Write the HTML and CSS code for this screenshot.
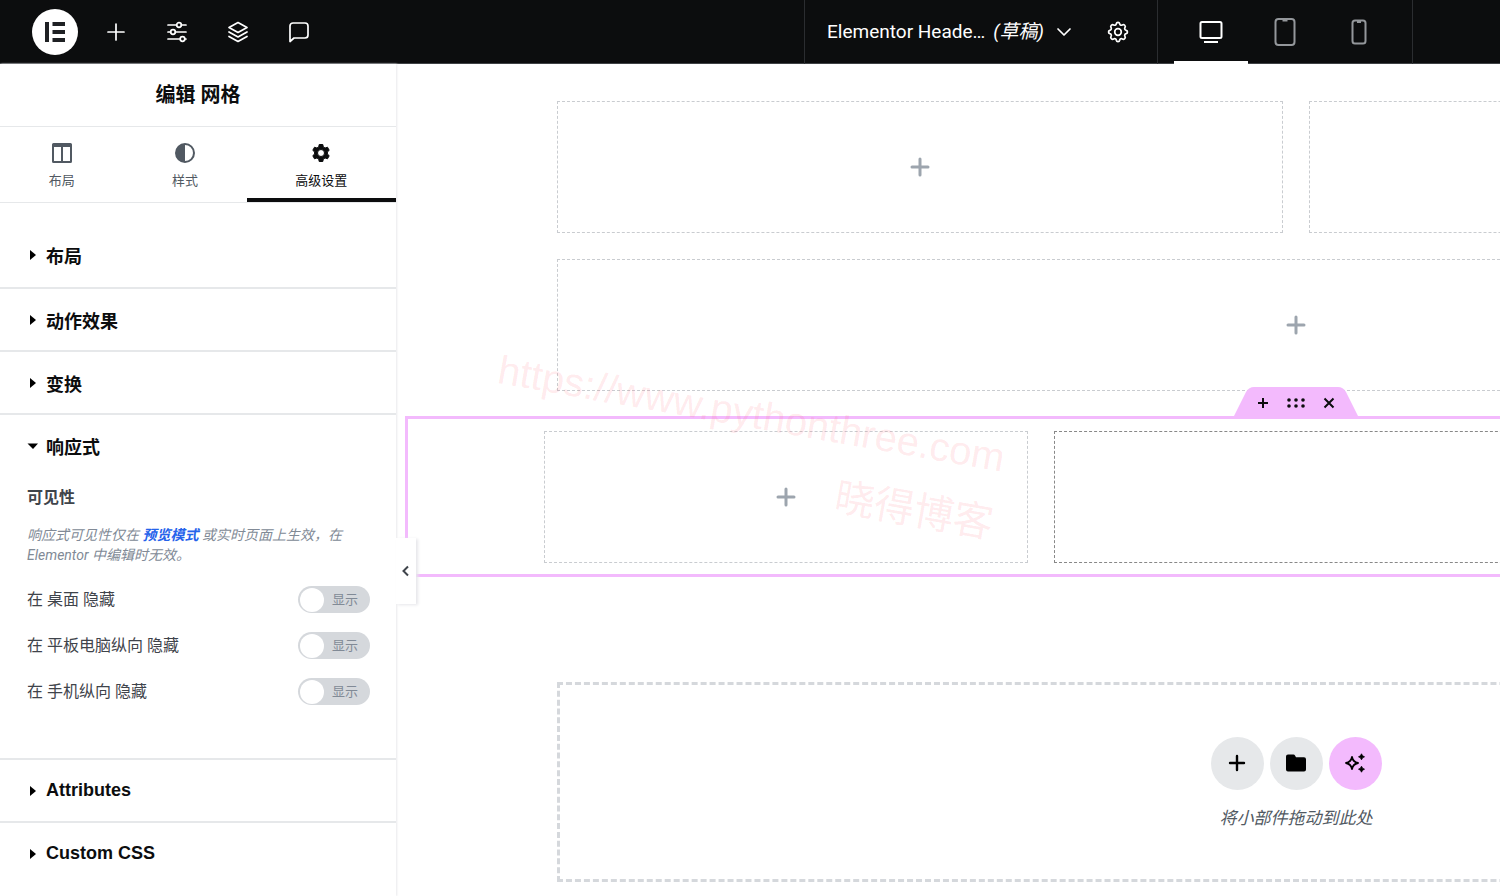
FILE: index.html
```html
<!DOCTYPE html>
<html lang="zh-CN">
<head>
<meta charset="utf-8">
<title>Elementor Header</title>
<link rel="stylesheet" href="styles.css">
</head>
<body class="editor">
<header class="topbar">
  <div class="tools">
    <button class="logo" aria-label="Elementor">
      <svg width="46" height="46" viewBox="0 0 46 46"><circle cx="23" cy="23" r="23" fill="#fff"/><path fill="#1f2124" d="M13 13h4v20h-4zM20.500 13H33v4H20.500zM20.500 21H33v4H20.500zM20.500 29H33v4H20.500z"/></svg>
    </button>
    <button class="tool" aria-label="添加元素"><svg class="line" width="24" height="24" viewBox="0 0 24 24"><path d="M12 4v16M4 12h16"/></svg></button>
    <button class="tool" aria-label="站点设置"><svg class="line" width="24" height="24" viewBox="0 0 24 24"><path d="M3 5h8.500M16.500 5H21M3 12h2.500M10.500 12H21M3 19h12M20 19h1"/><circle cx="14" cy="5" r="2.300"/><circle cx="8" cy="12" r="2.300"/><circle cx="17.500" cy="19" r="2.300"/></svg></button>
    <button class="tool" aria-label="结构"><svg class="line" width="24" height="24" viewBox="0 0 24 24"><path d="M12 2.500 21 7.500 12 12.500 3 7.500zM3 12l9 5 9-5M3 16.500l9 5 9-5"/></svg></button>
    <button class="tool" aria-label="备注"><svg class="line" width="24" height="24" viewBox="0 0 24 24"><path d="M3 21.500V6a3 3 0 0 1 3-3h12a3 3 0 0 1 3 3v9a3 3 0 0 1-3 3H7z"/></svg></button>
  </div>
  <div class="document">
    <button class="doc-name"><span>Elementor Heade…</span><i>(草稿)</i><svg class="line" width="16" height="16" viewBox="0 0 16 16"><path d="M2 5l6 6 6-6"/></svg></button>
    <button class="tool" aria-label="设置"><svg class="line" width="24" height="24" viewBox="0 0 24 24"><path d="M10.300 3.800c.4-1.800 3-1.800 3.400 0a1.700 1.700 0 0 0 2.700 1.100c1.600-1 3.700 1 2.600 2.700a1.700 1.700 0 0 0 1.100 2.700c1.800.4 1.800 3 0 3.400a1.700 1.700 0 0 0-1.100 2.700c1 1.600-1 3.600-2.600 2.600a1.700 1.700 0 0 0-2.700 1.200c-.4 1.800-3 1.800-3.400 0a1.700 1.700 0 0 0-2.700-1.200c-1.600 1-3.600-1-2.600-2.600a1.700 1.700 0 0 0-1.100-2.700c-1.800-.4-1.800-3 0-3.400A1.700 1.700 0 0 0 5 7.600C4 6 6 4 7.600 4.900a1.700 1.700 0 0 0 2.700-1.100z"/><circle cx="12" cy="12" r="3.300"/></svg></button>
  </div>
  <div class="devices">
    <button class="device active" aria-label="桌面"><svg width="28" height="28" viewBox="0 0 28 28"><rect x="3.500" y="4" width="21" height="16" rx="1.500"/><path d="M7 24h14"/></svg></button>
    <button class="device" aria-label="平板电脑"><svg width="28" height="28" viewBox="0 0 28 28"><rect x="4.500" y="1" width="19" height="26" rx="3"/><path d="M11.500 2.500h5"/></svg></button>
    <button class="device" aria-label="手机"><svg width="28" height="28" viewBox="0 0 28 28"><rect x="7.500" y="2.500" width="13" height="23" rx="2.500"/><path d="M12 4h4"/></svg></button>
  </div>
  <div class="topbar-end"></div>
</header>
<div class="workspace">
  <aside class="panel">
    <h1 class="panel-title">编辑 网格</h1>
    <nav class="tabs">
      <button class="tab"><svg width="22" height="22" viewBox="0 0 22 22"><path fill="currentColor" fill-rule="evenodd" d="M2.500 1h17A1.500 1.500 0 0 1 21 2.500v17a1.500 1.500 0 0 1-1.500 1.500h-17A1.500 1.500 0 0 1 1 19.500v-17A1.500 1.500 0 0 1 2.500 1zM3 5v14h7V5zM12 5v14h7V5z"/></svg><span>布局</span></button>
      <button class="tab"><svg width="22" height="22" viewBox="0 0 22 22"><circle cx="11" cy="11" r="9" fill="none" stroke="currentColor" stroke-width="2"/><path fill="currentColor" d="M11 2v18a9 9 0 0 1 0-18z"/></svg><span>样式</span></button>
      <button class="tab active"><svg width="22" height="22" viewBox="0 0 22 22"><path fill="currentColor" stroke="currentColor" stroke-linejoin="round" fill-rule="evenodd" d="M9.200 2.500h3.600l.5 2.400 1.800 1.100 2.400-.8 1.700 3.100-1.800 1.700v2l1.800 1.700-1.700 3.100-2.400-.8-1.800 1.100-.5 2.400H9.200l-.5-2.400-1.800-1.100-2.400.8-1.700-3.100L4.600 12v-2L2.800 8.300l1.700-3.100 2.400.8 1.800-1.100zM11 7.500a3.500 3.500 0 1 0 0 7 3.500 3.500 0 0 0 0-7z"/></svg><span>高级设置</span></button>
    </nav>
    <div class="sections">
      <section class="section"><button class="section-head"><svg class="caret" width="12" height="12" viewBox="0 0 12 12"><path d="M4 1l6 5-6 5z"/></svg>布局</button></section>
      <section class="section"><button class="section-head"><svg class="caret" width="12" height="12" viewBox="0 0 12 12"><path d="M4 1l6 5-6 5z"/></svg>动作效果</button></section>
      <section class="section"><button class="section-head"><svg class="caret" width="12" height="12" viewBox="0 0 12 12"><path d="M4 1l6 5-6 5z"/></svg>变换</button></section>
      <section class="section">
        <button class="section-head" aria-expanded="true"><svg class="caret" width="12" height="12" viewBox="0 0 12 12"><path d="M1.500 3.500H12L7 9z"/></svg>响应式</button>
        <div class="section-body">
          <h2 class="group-title">可见性</h2>
          <p class="hint">响应式可见性仅在 <a href="#preview">预览模式</a> 或实时页面上生效，在 Elementor 中编辑时无效。</p>
          <div class="controls">
            <label class="control"><span>在 桌面 隐藏</span><span class="switch"><input type="checkbox"><span class="switch-text">显示</span></span></label>
            <label class="control"><span>在 平板电脑纵向 隐藏</span><span class="switch"><input type="checkbox"><span class="switch-text">显示</span></span></label>
            <label class="control"><span>在 手机纵向 隐藏</span><span class="switch"><input type="checkbox"><span class="switch-text">显示</span></span></label>
          </div>
        </div>
      </section>
      <section class="section"><button class="section-head"><svg class="caret" width="12" height="12" viewBox="0 0 12 12"><path d="M4 1l6 5-6 5z"/></svg>Attributes</button></section>
      <section class="section"><button class="section-head"><svg class="caret" width="12" height="12" viewBox="0 0 12 12"><path d="M4 1l6 5-6 5z"/></svg>Custom CSS</button></section>
    </div>
    <button class="collapse" aria-label="收起面板"><svg width="12" height="12" viewBox="0 0 12 12"><path d="M8 1.500 3.500 6 8 10.500"/></svg></button>
  </aside>
  <main class="preview" id="preview">
    <div class="page">
      <div class="grid two">
        <div class="cell"><svg class="plus" width="20" height="20" viewBox="0 0 20 20"><path d="M10 2v16M2 10h16"/></svg></div>
        <div class="cell"></div>
        <div class="cell wide"><svg class="plus" width="20" height="20" viewBox="0 0 20 20"><path d="M10 2v16M2 10h16"/></svg></div>
      </div>
      <div class="selected">
        <div class="handle">
          <svg class="handle-shape" width="124" height="32" viewBox="0 0 124 32"><path d="M0 32V29L12 5Q15 0 20 0H104Q109 0 112 5L124 29V32z"/></svg>
          <button aria-label="添加"><svg width="12" height="12" viewBox="0 0 12 12"><path d="M6 1v10M1 6h10"/></svg></button>
          <button aria-label="编辑"><svg width="20" height="12" viewBox="0 0 20 12"><g class="dots"><circle cx="3" cy="3" r="1.800"/><circle cx="10" cy="3" r="1.800"/><circle cx="17" cy="3" r="1.800"/><circle cx="3" cy="9" r="1.800"/><circle cx="10" cy="9" r="1.800"/><circle cx="17" cy="9" r="1.800"/></g></svg></button>
          <button aria-label="删除"><svg width="12" height="12" viewBox="0 0 12 12"><path d="M1.500 1.500l9 9M10.500 1.500l-9 9"/></svg></button>
        </div>
        <div class="grid three">
          <div class="cell"><svg class="plus" width="20" height="20" viewBox="0 0 20 20"><path d="M10 2v16M2 10h16"/></svg></div>
          <div class="cell dark"></div>
          <div class="cell dark"></div>
        </div>
      </div>
      <div class="dropzone">
        <div class="drop-actions">
          <button class="round" aria-label="添加容器"><svg width="18" height="18" viewBox="0 0 18 18"><path d="M9 2v14M2 9h14" stroke="#000" stroke-width="2.400" stroke-linecap="round"/></svg></button>
          <button class="round" aria-label="模板库"><svg width="22" height="20" viewBox="0 0 22 20"><path d="M3 1.500h5.500q1 0 1.500 1l1 1.800h8q2 0 2 2v10.200q0 2-2 2H3q-2 0-2-2v-13q0-2 2-2z"/></svg></button>
          <button class="round pink" aria-label="AI"><svg width="22" height="22" viewBox="0 0 22 22"><path d="M8 5Q9 10 14 11 9 12 8 17 7 12 2 11 7 10 8 5z" fill="none" stroke="#000" stroke-width="1.800" stroke-linejoin="round"/><path d="M17.500 1.800q.6 2.400 3 3-2.400.6-3 3-.6-2.400-3-3 2.400-.6 3-3zM17.500 14.200q.6 2.400 3 3-2.400.6-3 3-.6-2.400-3-3 2.400-.6 3-3z" stroke="#000" stroke-width=".8"/></svg></button>
        </div>
        <p class="drop-text">将小部件拖动到此处</p>
      </div>
    </div>
  </main>
</div>
<div class="watermark" aria-hidden="true"><span>https://www.pythonthree.com</span><span>晓得博客</span></div>
</body>
</html>
```
FILE: styles.css
```css
* { box-sizing: border-box; }

.editor {
  margin: 0;
  height: 100vh;
  display: flex;
  flex-direction: column;
  overflow: hidden;
  position: relative;
  background: #fff;
  color: #0c0d0e;
  font-family: Roboto, "Noto Sans CJK SC", sans-serif;
}

button {
  display: flex;
  align-items: center;
  justify-content: center;
  padding: 0;
  border: 0;
  background: none;
  color: inherit;
  font: inherit;
  cursor: pointer;
}

h1, h2, p { margin: 0; }

/* Top bar */
.topbar {
  display: grid;
  grid-template-columns: 1fr auto auto 88px;
  flex: none;
  height: 64px;
  background: #0c0d0e;
  border-bottom: 1px solid #3f4245;
  color: #fff;
}

.tools { display: flex; align-items: center; gap: 17px; padding-left: 32px; }
.tool { width: 44px; height: 44px; }
.logo { width: 45px; }
.logo svg { flex: none; }

.line {
  fill: none;
  stroke: currentColor;
  stroke-width: 1.7;
  stroke-linecap: round;
  stroke-linejoin: round;
}

.document {
  display: flex;
  align-items: center;
  gap: 24px;
  padding: 0 17px 0 22px;
  border-left: 1px solid #2b2d30;
  border-right: 1px solid #2b2d30;
}

.doc-name { gap: 8px; font-size: 19px; line-height: 24px; white-space: nowrap; }
.doc-name .line { margin-left: 4px; }

.devices { display: flex; padding: 0 16px; }
.topbar-end { border-left: 1px solid #2b2d30; }

.device {
  width: 74px;
  height: 64px;
  border-top: 3px solid transparent;
  border-bottom: 3px solid transparent;
  color: #94979b;
}

.device.active { color: #fff; border-bottom-color: #fff; }
.device svg { fill: none; stroke: currentColor; stroke-width: 2; }

/* Panel */
.workspace { display: flex; flex: 1; min-height: 0; }

.panel {
  position: relative;
  z-index: 2;
  flex: none;
  width: 396px;
  background: #fff;
  box-shadow: 1px 0 2px #e9e9ec;
}

.panel-title {
  padding: 16px 0;
  border-bottom: 1px solid #e6e8ea;
  font-size: 20px;
  line-height: 30px;
  text-align: center;
}

.tabs { display: flex; border-bottom: 1px solid #e6e8ea; }

.tab {
  flex: 1 1 auto;
  flex-direction: column;
  gap: 7px;
  height: 75px;
  padding-top: 8px;
  border-bottom: 4px solid transparent;
  color: #515962;
  font-size: 13px;
  line-height: 20px;
}

.tab.active { color: #0c0d0e; border-bottom-color: #0c0d0e; }

.sections { padding-top: 21px; }
.section { border-bottom: 2px solid #e6e8ea; }
.section:first-child { padding-bottom: 2px; }
.section:last-child { border-bottom: 0; }

.section-head {
  justify-content: flex-start;
  gap: 8px;
  width: 100%;
  height: 61px;
  padding: 0 26px;
  font-family: "Liberation Sans", "Noto Sans CJK SC", sans-serif;
  font-size: 18px;
  font-weight: 700;
}

.section-body { padding: 10px 26px 53px 27px; color: #3f444b; }
.group-title { font-size: 16px; line-height: 24px; }

.hint {
  margin: 15px 0 21px;
  color: #818a96;
  font-size: 14px;
  font-style: italic;
  line-height: 20px;
}

.hint a { color: #2563eb; font-weight: 700; text-decoration: none; }

.controls { display: flex; flex-direction: column; gap: 19px; }

.control {
  display: flex;
  align-items: center;
  justify-content: space-between;
  font-size: 16px;
  line-height: 27px;
}

.switch {
  display: grid;
  align-items: center;
  width: 72px;
  height: 27px;
  border-radius: 14px;
  background: #d5d8dc;
}

.switch > * { grid-area: 1 / 1; }

.switch input {
  width: 24px;
  height: 24px;
  margin: 0 0 0 2px;
  appearance: none;
  border-radius: 50%;
  background: #fff;
}

.switch input:checked { margin-left: 46px; }
.switch-text { padding-left: 34px; color: #818a96; font-size: 13px; }

.collapse {
  position: absolute;
  top: 474px;
  left: 100%;
  width: 20px;
  height: 66px;
  background: #fff;
  box-shadow: 2px 1px 3px #e6e6ea;
}

.collapse svg { fill: none; stroke: #3f444b; stroke-width: 2; }

/* Preview */
.preview { flex: 1; min-width: 0; overflow: hidden; padding-left: 9px; }
.page { min-width: 1782px; padding-top: 37px; }

.grid { display: grid; gap: 26px; margin: 0 auto; }
.two { grid-template-columns: 1fr 1fr; max-width: 1478px; }
.three { grid-template-columns: 1fr 1fr 1fr; max-width: 1504px; }
.wide { grid-column: 1 / -1; }

.cell {
  display: flex;
  align-items: center;
  justify-content: center;
  height: 132px;
  border: 1px dashed #c9ccd0;
}

.cell.dark { border-color: #888; }
.plus { stroke: #9da5ae; stroke-width: 3; stroke-linecap: round; }

.selected {
  position: relative;
  margin-top: 25px;
  padding: 12px 0 11px;
  border: 3px solid #f3bafd;
}

.handle {
  position: absolute;
  bottom: 100%;
  left: 50%;
  display: flex;
  align-items: center;
  justify-content: center;
  gap: 17px;
  width: 124px;
  height: 32px;
  transform: translateX(-50%);
}

.handle-shape { position: absolute; inset: 0; fill: #f3bafd; }
.handle button { position: relative; }
.handle button svg { stroke: #0c0d0e; stroke-width: 2; }
.handle button .dots { fill: #0c0d0e; stroke: none; }

.dropzone {
  display: flex;
  flex-direction: column;
  align-items: center;
  justify-content: center;
  gap: 15px;
  height: 200px;
  max-width: 1478px;
  margin: 105px auto 0;
  padding-top: 3px;
  border: 3px dashed #d5d8dc;
}

.drop-actions { display: flex; gap: 6px; }

.round {
  width: 53px;
  height: 53px;
  border-radius: 50%;
  background: #e6e8ea;
}

.round.pink { background: #f3bafd; }

.drop-text {
  color: #515962;
  font-size: 17px;
  font-style: italic;
  line-height: 26px;
}

/* Watermark laid over the editor */
.watermark {
  position: absolute;
  z-index: 3;
  top: 391px;
  left: 489px;
  display: flex;
  flex-direction: column;
  align-items: flex-end;
  gap: 22px;
  color: rgba(255, 60, 80, 0.11);
  font-family: "Liberation Sans", "Noto Sans CJK SC", sans-serif;
  font-size: 40px;
  line-height: 45px;
  transform: rotate(10deg);
  pointer-events: none;
}
```
